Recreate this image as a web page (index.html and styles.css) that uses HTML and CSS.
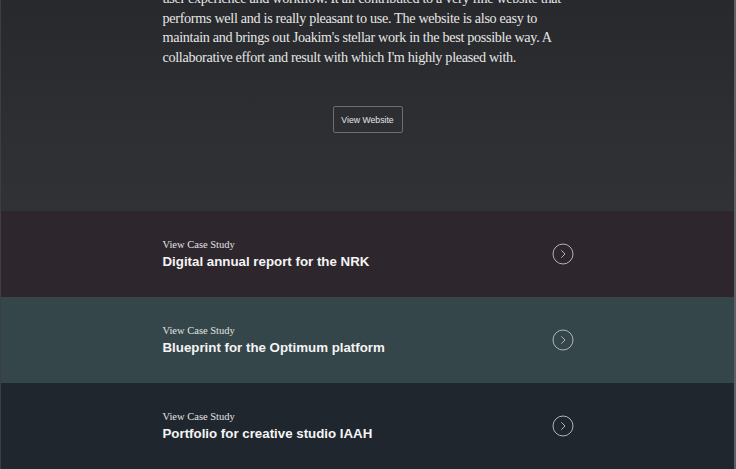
FILE: index.html
```html
<!DOCTYPE html>
<html lang="en">
<head>
<meta charset="utf-8">
<title>Case Study</title>
<link rel="stylesheet" href="styles.css">
</head>
<body>
<div class="page">
  <section class="testimonial">
    <div class="container">
      <p class="quote">user experience and workflow. It all contributed to a very fine website that performs well and is really pleasant to use. The website is also easy to maintain and brings out Joakim's stellar work in the best possible way. A collaborative effort and result with which I'm highly pleased with.</p>
      <div class="actions">
        <a class="btn" href="#">View Website</a>
      </div>
    </div>
  </section>

  <a class="case case--plum" href="#">
    <div class="container case-inner">
      <div class="case-text">
        <span class="case-label">View Case Study</span>
        <span class="case-title">Digital annual report for the NRK</span>
      </div>
      <svg class="case-arrow" width="22" height="22" viewBox="0 0 22 22" aria-hidden="true">
        <circle cx="11" cy="11" r="10" fill="none" stroke="currentColor" stroke-width="1"/>
        <path d="M9.6 7.6 L13 11 L9.6 14.4" fill="none" stroke="currentColor" stroke-width="1" stroke-linecap="round" stroke-linejoin="round"/>
      </svg>
    </div>
  </a>

  <a class="case case--teal" href="#">
    <div class="container case-inner">
      <div class="case-text">
        <span class="case-label">View Case Study</span>
        <span class="case-title">Blueprint for the Optimum platform</span>
      </div>
      <svg class="case-arrow" width="22" height="22" viewBox="0 0 22 22" aria-hidden="true">
        <circle cx="11" cy="11" r="10" fill="none" stroke="currentColor" stroke-width="1"/>
        <path d="M9.6 7.6 L13 11 L9.6 14.4" fill="none" stroke="currentColor" stroke-width="1" stroke-linecap="round" stroke-linejoin="round"/>
      </svg>
    </div>
  </a>

  <a class="case case--navy" href="#">
    <div class="container case-inner">
      <div class="case-text">
        <span class="case-label">View Case Study</span>
        <span class="case-title">Portfolio for creative studio IAAH</span>
      </div>
      <svg class="case-arrow" width="22" height="22" viewBox="0 0 22 22" aria-hidden="true">
        <circle cx="11" cy="11" r="10" fill="none" stroke="currentColor" stroke-width="1"/>
        <path d="M9.6 7.6 L13 11 L9.6 14.4" fill="none" stroke="currentColor" stroke-width="1" stroke-linecap="round" stroke-linejoin="round"/>
      </svg>
    </div>
  </a>
</div>
</body>
</html>
```

FILE: styles.css
```css
* {
  box-sizing: border-box;
}

html,
body {
  margin: 0;
  padding: 0;
  height: 100%;
  overflow: hidden;
  background: #2b2d31;
}

.page {
  height: 469px;
  border-left: 1px solid #3c3e43;
  border-right: 2px solid #5c5f64;
  display: flex;
  flex-direction: column;
}

.container {
  width: 410px;
  margin: 0 auto;
}

/* Quote block */
.testimonial {
  height: 211px;
  background: linear-gradient(180deg, #27292d 0%, #303236 100%);
  overflow: hidden;
}

.testimonial .container {
  margin-top: -11px;
}

.quote {
  margin: 0;
  font-family: "Liberation Serif", "Times New Roman", serif;
  font-size: 14.2px;
  line-height: 19.5px;
  color: #e6e6e4;
  letter-spacing: -0.32px;
}

.actions {
  display: flex;
  justify-content: center;
  margin-top: 39px;
}

.btn {
  display: inline-flex;
  align-items: center;
  justify-content: center;
  width: 70px;
  height: 27px;
  border: 1px solid #6a6d72;
  border-radius: 2px;
  font-family: "Liberation Sans", Arial, sans-serif;
  font-size: 8.7px;
  color: #e6e6e6;
  text-decoration: none;
}

/* Case study rows */
.case {
  display: block;
  height: 86px;
  text-decoration: none;
  color: #f2f2f2;
}

.case--plum {
  background: #2d272d;
}

.case--teal {
  background: #35464a;
}

.case--navy {
  background: #20262e;
}

.case-inner {
  height: 100%;
  display: flex;
  align-items: center;
  justify-content: space-between;
}

.case-text {
  display: flex;
  flex-direction: column;
}

.case-label {
  font-family: "Liberation Serif", "Times New Roman", serif;
  font-size: 10.5px;
  line-height: 14px;
  color: #e2e2e2;
}

.case-title {
  margin-top: 1px;
  font-family: "Liberation Sans", Arial, sans-serif;
  font-weight: 700;
  font-size: 13.3px;
  line-height: 18px;
  color: #f4f4f4;
}

.case-arrow {
  color: #b3b4b7;
  margin-right: -1px;
  flex: none;
}
```
